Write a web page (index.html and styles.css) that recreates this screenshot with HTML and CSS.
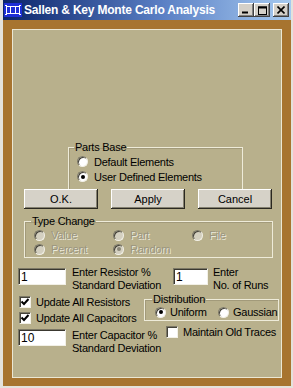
FILE: index.html
```html
<!DOCTYPE html>
<html lang="en">
<head>
    <meta charset="UTF-8">
    <title>Sallen &amp; Key Monte Carlo Analysis</title>
    <link rel="stylesheet" href="styles.css">
</head>
<body>
    <div class="window">
        <!-- Заголовок окна -->
        <div class="titlebar">
            <svg class="app-icon" width="18" height="14" viewBox="0 0 18 14">
                <rect x="0" y="0" width="18" height="14" fill="#1d2fd6"/>
                <rect x="2.5" y="3.5" width="13" height="7" fill="none" stroke="#fff"/>
                <path d="M6.5 3v8M11.5 3v8M1 2.5h2M15 2.5h2M1 11.5h2M15 11.5h2" stroke="#fff"/>
            </svg>
            <span class="title">Sallen &amp; Key Monte Carlo Analysis</span>
            <div class="caption-btns">
                <span class="cap-btn">
                    <svg width="8" height="8" viewBox="0 0 8 8"><path d="M0 6.5h6" stroke="#000" stroke-width="2"/></svg>
                </span>
                <span class="cap-btn">
                    <svg width="9" height="9" viewBox="0 0 9 9"><rect x="0.5" y="1" width="8" height="7.5" fill="none" stroke="#000"/><path d="M0 1.5h9" stroke="#000" stroke-width="2"/></svg>
                </span>
                <span class="cap-btn close">
                    <svg width="8" height="8" viewBox="0 0 8 8"><path d="M0.5 0.5l7 7M7.5 0.5l-7 7" stroke="#000" stroke-width="1.6"/></svg>
                </span>
            </div>
        </div>

        <div class="frame">
            <div class="panel">
                <!-- База элементов -->
                <fieldset class="group parts">
                    <legend>Parts Base</legend>
                    <div class="opt"><span class="radio"></span>Default Elements</div>
                    <div class="opt"><span class="radio on"></span>User Defined Elements</div>
                </fieldset>

                <div class="buttons">
                    <button>O.K.</button>
                    <button>Apply</button>
                    <button>Cancel</button>
                </div>

                <!-- Тип изменения (неактивно) -->
                <fieldset class="group types">
                    <legend>Type Change</legend>
                    <div class="opt off"><span class="radio"></span>Value</div>
                    <div class="opt off"><span class="radio"></span>Part</div>
                    <div class="opt off"><span class="radio"></span>File</div>
                    <div class="opt off"><span class="radio"></span>Percent</div>
                    <div class="opt off"><span class="radio on"></span>Random</div>
                </fieldset>

                <div class="entry first">
                    <input class="field wide" type="text" value="1">
                    <label class="hint res">Enter Resistor %<br>Standard Deviation</label>
                    <input class="field narrow" type="text" value="1">
                    <label class="hint runs">Enter<br>No. of Runs</label>
                </div>

                <div class="mid">
                    <div class="checks">
                        <div class="opt"><span class="check on"><svg width="10" height="10" viewBox="0 0 10 10"><path d="M1.5 4.5l2.5 2.5 4.5-5" fill="none" stroke="#000" stroke-width="2"/></svg></span>Update All Resistors</div>
                        <div class="opt"><span class="check on"><svg width="10" height="10" viewBox="0 0 10 10"><path d="M1.5 4.5l2.5 2.5 4.5-5" fill="none" stroke="#000" stroke-width="2"/></svg></span>Update All Capacitors</div>
                    </div>
                    <fieldset class="group dist">
                        <legend>Distribution</legend>
                        <div class="opt"><span class="radio on"></span>Uniform</div>
                        <div class="opt"><span class="radio"></span>Gaussian</div>
                    </fieldset>
                </div>

                <div class="entry last">
                    <input class="field wide" type="text" value="10">
                    <label class="hint cap">Enter Capacitor %<br>Standard Deviation</label>
                    <div class="opt maintain"><span class="check"></span>Maintain Old Traces</div>
                </div>
            </div>
        </div>
    </div>
</body>
</html>
```

FILE: styles.css
```css
body {
    margin: 0;
    width: 293px;
    height: 388px;
    overflow: hidden;
    background: #e4e2dc;
    font-family: "Liberation Sans", Arial, sans-serif;
    font-size: 11px;
    letter-spacing: -0.25px;
    color: #000;
}
.window {
    margin-left: 3px;
    width: 288px;
    height: 386px;
    background: #a7742f;
    display: flex;
    flex-direction: column;
}
.titlebar {
    height: 20px;
    display: flex;
    align-items: center;
    padding: 0 2px 0 1px;
    background: linear-gradient(to right, #0a246a 0%, #5a7fc4 55%, #a6caf0 100%);
}
.app-icon {
    flex: none;
}
.title {
    margin-left: 2px;
    color: #fff;
    font-weight: bold;
    font-size: 12px;
    letter-spacing: -0.2px;
}
.caption-btns {
    margin-left: auto;
    display: flex;
}
.cap-btn {
    width: 16px;
    height: 14px;
    box-sizing: border-box;
    display: flex;
    align-items: center;
    justify-content: center;
    background: #d4d0c8;
    box-shadow: inset -1px -1px #404040, inset 1px 1px #fff, inset -2px -2px #808080;
}
.cap-btn.close {
    margin-left: 3px;
}
.frame {
    flex: 1;
    padding: 9px 9px 8px 9px;
    display: flex;
}
.panel {
    flex: 1;
    background: #b8b08c;
    border: 1px solid #ebe7d3;
}
.group {
    margin: 0;
    padding: 0;
    box-sizing: border-box;
    border: 1px solid #eeebd9;
    box-shadow: inset 1px 1px 0 rgba(120, 114, 88, 0.35);
}
.group legend {
    margin-left: -3px;
    padding: 0 1px;
    line-height: 13px;
}
.opt {
    display: flex;
    align-items: center;
    white-space: nowrap;
}
.radio {
    flex: none;
    width: 11px;
    height: 11px;
    box-sizing: border-box;
    border-radius: 50%;
    background: #fff;
    border: 1px solid;
    border-color: #7c7866 #f2f0e6 #f2f0e6 #7c7866;
    box-shadow: inset 1px 1px #45433a;
    display: flex;
    align-items: center;
    justify-content: center;
}
.radio.on::after {
    content: "";
    width: 4px;
    height: 4px;
    border-radius: 50%;
    background: #000;
}
.check {
    flex: none;
    width: 12px;
    height: 12px;
    box-sizing: border-box;
    background: #fff;
    border: 1px solid;
    border-color: #7c7866 #f2f0e6 #f2f0e6 #7c7866;
    box-shadow: inset 1px 1px #45433a;
    display: flex;
    align-items: center;
    justify-content: center;
}
.parts {
    margin: 111px 0 0 55px;
    width: 175px;
    border-bottom: none;
    padding: 0 0 5px 8px;
}
.parts .opt {
    height: 15px;
    gap: 6px;
}
.buttons {
    display: flex;
    gap: 13px;
    margin-left: 11px;
}
button {
    width: 74px;
    height: 20px;
    margin: 0;
    padding: 0;
    border: none;
    background: #d6d2c8;
    font: inherit;
    color: #000;
    box-shadow: inset -1px -1px #2a2820, inset 1px 1px #fff, inset -2px -2px #858170;
}
.types {
    margin: 6px 0 0 11px;
    width: 249px;
    padding: 0 0 1px 9px;
    display: grid;
    grid-template-columns: 79px 79px 1fr;
    grid-auto-rows: 14px;
}
.types .opt {
    gap: 6px;
}
.opt.off {
    color: #9a9580;
    text-shadow: 1px 1px 0 #ebe8da;
}
.opt.off .radio {
    background: #d4d0c0;
}
.opt.off .radio.on::after {
    background: #8a8676;
}
.entry {
    display: flex;
    align-items: flex-start;
    margin-left: 5px;
}
.entry.first {
    margin-top: 8px;
}
.field {
    height: 17px;
    box-sizing: border-box;
    margin: 2px 0 0 0;
    padding: 0 2px;
    background: #fff;
    border: 1px solid;
    border-color: #7c7866 #f2f0e6 #f2f0e6 #7c7866;
    box-shadow: inset 1px 1px #3a3830;
    font: inherit;
    font-size: 12px;
    color: #000;
    outline: none;
}
.field.wide {
    width: 48px;
}
.field.narrow {
    width: 35px;
    margin-left: 6px;
}
.hint {
    line-height: 13px;
    margin-left: 6px;
}
.hint.res {
    width: 95px;
}
.hint.runs {
    margin-left: 5px;
}
.mid {
    display: flex;
    align-items: flex-start;
    margin: 1px 0 0 6px;
}
.checks {
    width: 125px;
    padding-top: 1px;
}
.checks .opt {
    height: 16px;
    gap: 5px;
}
.dist {
    width: 135px;
    padding: 0 0 2px 10px;
    display: grid;
    grid-template-columns: 63px auto;
    grid-auto-rows: 12px;
}
.dist .opt {
    gap: 4px;
}
.entry.last .field {
    margin-top: 3px;
}
.hint.cap {
    width: 94px;
    margin-top: 3px;
}
.maintain {
    gap: 5px;
    height: 12px;
}
```
